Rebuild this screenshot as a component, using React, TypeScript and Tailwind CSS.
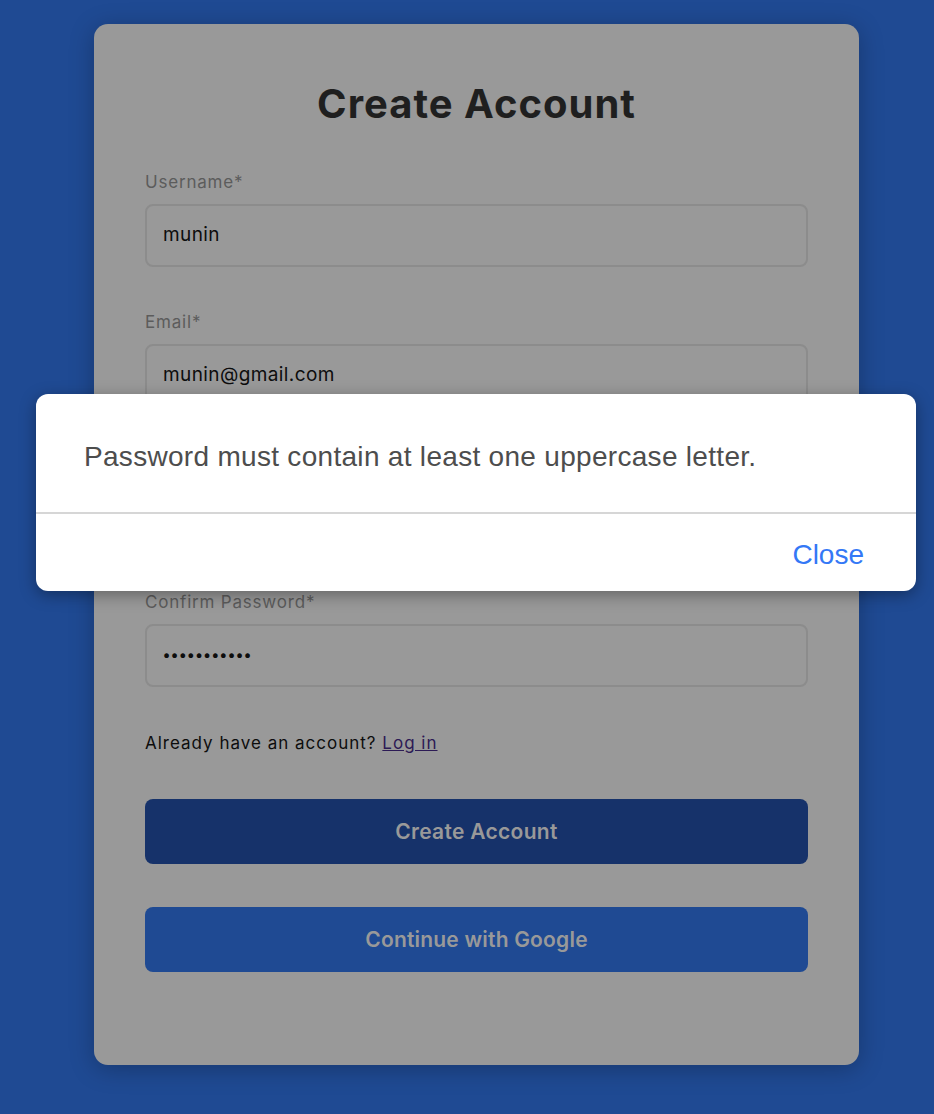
import React from "react";

function Field({ label, value, pw }: { label: string; value: string; pw?: boolean }) {
  return (
    <div className="flex flex-col">
      <label className="text-[17px] leading-[24px] tracking-[0.8px] text-[#5c5c5c] h-[24px]">{label}</label>
      <div className="mt-[10px] h-[63px] rounded-[8px] border-2 border-[#8c8c8c] flex items-center px-[16px] text-[19px] tracking-[0.4px] text-[#0d0d0d]">
        {pw ? <span className="tracking-[1px] text-[15px] font-bold">•••••••••••</span> : value}
      </div>
    </div>
  );
}

export default function App() {
  return (
    <div className="relative w-[934px] h-[1114px] bg-[#1f4a93] overflow-hidden" style={{ fontFamily: "Inter, 'Noto Sans', sans-serif" }}>
      <div className="pt-[24px] pl-[94px]">
        <div className="w-[765px] h-[1041px] bg-[#999999] rounded-[14px] shadow-[0_4px_24px_rgba(0,0,0,0.25)] px-[51px] pt-[54px]">
          <h1 className="text-center text-[40px] leading-[52px] font-bold text-[#1f1f1f] tracking-[1px]">Create Account</h1>
          <div className="mt-[40px] flex flex-col gap-[43px]">
            <Field label="Username*" value="munin" />
            <Field label="Email*" value="munin@gmail.com" />
            <Field label="Password*" value="" pw />
            <Field label="Confirm Password*" value="" pw />
          </div>
          <p className="mt-[44px] text-[17px] leading-[24px] tracking-[1px] text-[#0d0d0d]">
            Already have an account? <span className="underline text-[#2c1a55]">Log in</span>
          </p>
          <button className="mt-[44px] w-full h-[65px] rounded-[8px] bg-[#16326a] text-[#999999] text-[21px] tracking-[0.3px] font-semibold">Create Account</button>
          <button className="mt-[43px] w-full h-[65px] rounded-[8px] bg-[#1f4a93] text-[#999999] text-[21px] tracking-[0.2px] font-semibold">Continue with Google</button>
        </div>
      </div>
      <div className="absolute left-[36px] top-[394px] w-[880px] h-[197px] bg-white rounded-[12px] shadow-[0_4px_16px_rgba(0,0,0,0.35)] flex flex-col" style={{ fontFamily: "'Liberation Sans', Arial, sans-serif" }}>
        <div className="h-[118px] flex items-center pl-[48px] pt-[8px] text-[28px] tracking-[0.3px] text-[#4d4d4d]">Password must contain at least one uppercase letter.</div>
        <div className="h-[2px] bg-[#d6d6d6]" />
        <div className="flex-1 flex items-center justify-end pr-[52px]">
          <span className="text-[28px] text-[#3478f6] pt-[4px]">Close</span>
        </div>
      </div>
    </div>
  );
}
